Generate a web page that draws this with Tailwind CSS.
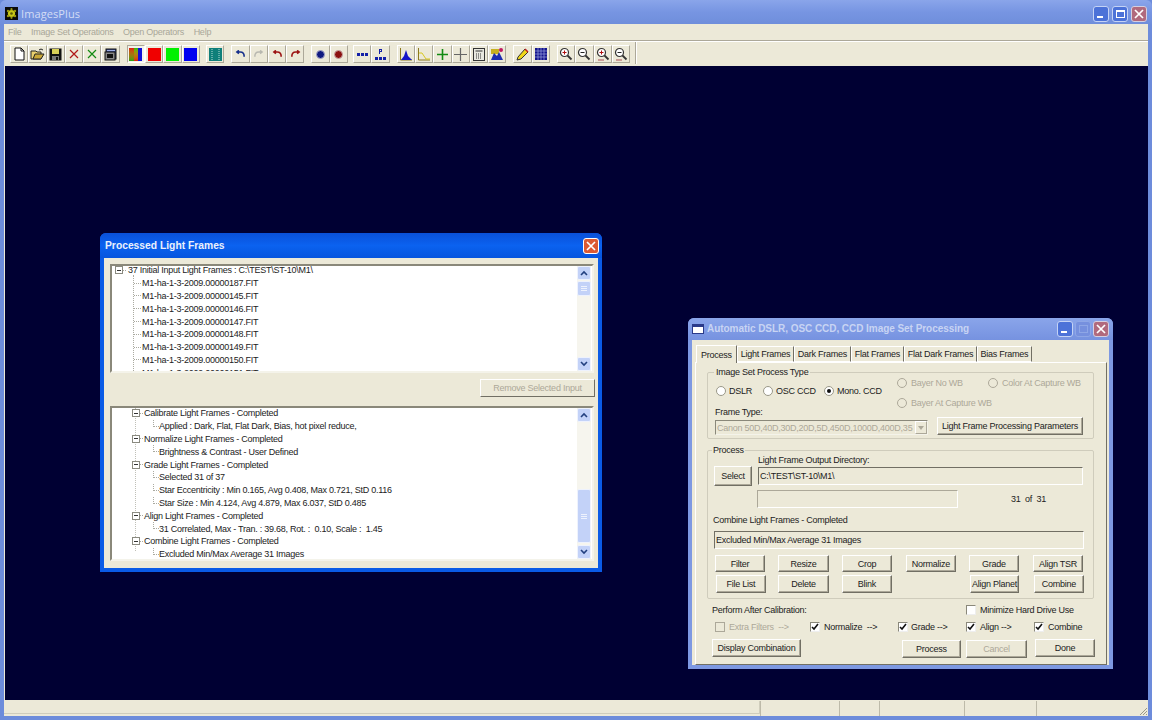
<!DOCTYPE html>
<html><head><meta charset="utf-8">
<script src="https://cdn.jsdelivr.net/npm/@tailwindcss/browser@4"></script>
<title>ImagesPlus</title></head>
<body class="m-0">
<div class="w-[1152px] h-[720px] overflow-hidden flex flex-col bg-[#6d8cdb] font-['Liberation_Sans',sans-serif] text-[9px] leading-[12px] tracking-[-0.25px] text-[#222]">
  <!-- main title bar -->
  <div class="h-[24px] shrink-0 flex items-center pt-[3px] pl-[5px] pr-[5px] bg-gradient-to-b from-[#8aa5ea] via-[#7795e2] to-[#6f8edb] rounded-t-[6px]">
    <svg class="w-[13px] h-[13px] shrink-0" viewBox="0 0 13 13"><rect width="13" height="13" fill="#0a0a0a"/><circle cx="6.5" cy="6.5" r="3.6" fill="#c8c818"/><circle cx="3" cy="4" r="1.2" fill="#9a9a10"/><circle cx="10" cy="4" r="1.2" fill="#9a9a10"/><circle cx="3" cy="9" r="1.2" fill="#9a9a10"/><circle cx="10" cy="9" r="1.2" fill="#9a9a10"/><circle cx="6.5" cy="2.2" r="1.1" fill="#9a9a10"/><circle cx="6.5" cy="10.8" r="1.1" fill="#9a9a10"/><circle cx="6.5" cy="6.5" r="1.3" fill="#5a5a08"/></svg>
    <span class="ml-[3px] text-[11px] tracking-[0.1px] text-[#d3ddf5] font-['Open_Sans',sans-serif]">ImagesPlus</span>
    <div class="ml-auto flex gap-[3px]">
      <div class="w-[16px] h-[16px] rounded-[3px] bg-[#4c72d8] border border-[#c5d3f5] flex items-end pl-[3px] pb-[3px]"><span class="w-[6px] h-[2px] bg-white"></span></div>
      <div class="w-[16px] h-[16px] rounded-[3px] bg-[#4c72d8] border border-[#c5d3f5] flex items-center justify-center"><span class="w-[9px] h-[8px] border border-white border-t-2"></span></div>
      <div class="w-[16px] h-[16px] rounded-[3px] bg-[#b16a7d] border border-[#d5cfe0] flex items-center justify-center"><svg class="w-[10px] h-[10px]" viewBox="0 0 10 10"><path d="M1 1L9 9M9 1L1 9" stroke="#fff" stroke-width="1.7"/></svg></div>
    </div>
  </div>
  <div class="flex-1 min-h-0 mx-[4px] mb-[4px] flex flex-col bg-[#ece9d8]">
    <!-- menu -->
    <div class="h-[16px] shrink-0 flex items-center pl-[4px] gap-[9.5px] text-[#a9a799]">
      <span>File</span><span>Image Set Operations</span><span>Open Operators</span><span>Help</span>
    </div>
    <!-- toolbar -->
    <div class="h-[26px] shrink-0 border-t border-t-[#aca899] shadow-[inset_0_1px_0_#fff] flex items-start pt-[4px] pl-[6px]">
      <div class="flex h-[18px]">
        <div class="w-[18.3px] h-[18px] border border-t-white border-l-white border-r-[#aca899] border-b-[#aca899] flex items-center justify-center"><svg class="w-[14px] h-[14px]" viewBox="0 0 14 14"><path d="M3 1h6l3 3v9H3z" fill="#fff" stroke="#111"/><path d="M9 1v3h3" fill="none" stroke="#111"/></svg></div>
        <div class="w-[18.3px] h-[18px] border border-t-white border-l-white border-r-[#aca899] border-b-[#aca899] flex items-center justify-center"><svg class="w-[15px] h-[14px]" viewBox="0 0 15 14"><path d="M1 4h5l1 1h4v7H1z" fill="#e8d070" stroke="#222"/><path d="M3 12l2-5h9l-3 5z" fill="#c9a838" stroke="#222"/><path d="M9 3q2-2 4 0" stroke="#222" fill="none"/></svg></div>
        <div class="w-[18.3px] h-[18px] border border-t-white border-l-white border-r-[#aca899] border-b-[#aca899] flex items-center justify-center"><svg class="w-[13px] h-[13px]" viewBox="0 0 13 13"><rect x=".5" y=".5" width="12" height="12" fill="#111"/><rect x="3" y="1" width="7" height="5" fill="#d8d058"/><rect x="3" y="8" width="7" height="4" fill="#777"/><rect x="7" y="9" width="2" height="3" fill="#111"/></svg></div>
        <div class="w-[18.3px] h-[18px] border border-t-white border-l-white border-r-[#aca899] border-b-[#aca899] flex items-center justify-center"><svg class="w-[10px] h-[10px]" viewBox="0 0 10 10"><path d="M1 1L9 9M9 1L1 9" stroke="#b01818" stroke-width="1.2"/></svg></div>
        <div class="w-[18.3px] h-[18px] border border-t-white border-l-white border-r-[#aca899] border-b-[#aca899] flex items-center justify-center"><svg class="w-[10px] h-[10px]" viewBox="0 0 10 10"><path d="M1 1L9 9M9 1L1 9" stroke="#128a12" stroke-width="1.2"/></svg></div>
        <div class="w-[18.3px] h-[18px] border border-t-white border-l-white border-r-[#aca899] border-b-[#aca899] flex items-center justify-center"><svg class="w-[13px] h-[13px]" viewBox="0 0 13 13"><rect x="2" y="1" width="10" height="10" fill="#3a4a8a" stroke="#111"/><rect x="1" y="4" width="10" height="8" fill="#888" stroke="#111"/><rect x="3" y="6" width="6" height="4" fill="#111"/><rect x="3" y="2" width="8" height="1" fill="#9fb0e8"/></svg></div>
      </div>
      <div class="flex h-[18px] ml-[7px]">
        <div class="w-[18.3px] h-[18px] border border-t-[#aca899] border-l-[#aca899] border-r-white border-b-white bg-[#f4f3ea] flex items-center justify-center"><div class="w-[13px] h-[13px] flex"><span class="flex-1 bg-gradient-to-b from-[#e01010] to-[#10a010]"></span><span class="flex-1 bg-gradient-to-b from-[#10c010] to-[#e01010]"></span><span class="flex-1 bg-[#1010d8]"></span></div></div>
        <div class="w-[18.3px] h-[18px] border border-t-white border-l-white border-r-[#aca899] border-b-[#aca899] flex items-center justify-center"><span class="w-[13px] h-[13px] bg-[#f00000]"></span></div>
        <div class="w-[18.3px] h-[18px] border border-t-white border-l-white border-r-[#aca899] border-b-[#aca899] flex items-center justify-center"><span class="w-[13px] h-[13px] bg-[#00f000]"></span></div>
        <div class="w-[18.3px] h-[18px] border border-t-white border-l-white border-r-[#aca899] border-b-[#aca899] flex items-center justify-center"><span class="w-[13px] h-[13px] bg-[#0000f0]"></span></div>
      </div>
      <div class="flex h-[18px] ml-[6px]">
        <div class="w-[18.3px] h-[18px] border border-t-white border-l-white border-r-[#aca899] border-b-[#aca899] flex items-center justify-center"><svg class="w-[13px] h-[13px]" viewBox="0 0 13 13"><rect width="13" height="13" fill="#0f7f7a"/><path d="M3 1v11M10 1v11" stroke="#b8ddd8" stroke-dasharray="1 1"/></svg></div>
      </div>
      <div class="flex h-[18px] ml-[7px]">
        <div class="w-[18.3px] h-[18px] border border-t-white border-l-white border-r-[#aca899] border-b-[#aca899] flex items-center justify-center"><svg class="w-[11px] h-[8px]" viewBox="0 0 12 10"><path d="M10.5 8.5Q11 2.5 5.5 2.5H2M4 .5L1.5 2.5 4 4.5" fill="none" stroke="#16308c" stroke-width="2"/></svg></div>
        <div class="w-[18.3px] h-[18px] border border-t-white border-l-white border-r-[#aca899] border-b-[#aca899] flex items-center justify-center"><svg class="w-[11px] h-[8px]" viewBox="0 0 12 10"><path d="M1.5 8.5Q1 2.5 6.500 2.500H10M8 .5L10.500 2.500 8 4.500" fill="none" stroke="#b8b8b0" stroke-width="1.8"/></svg></div>
        <div class="w-[18.3px] h-[18px] border border-t-white border-l-white border-r-[#aca899] border-b-[#aca899] flex items-center justify-center"><svg class="w-[11px] h-[8px]" viewBox="0 0 12 10"><path d="M10.5 8.5Q11 2.5 5.5 2.5H2M4 .5L1.5 2.5 4 4.5" fill="none" stroke="#9c1414" stroke-width="2"/></svg></div>
        <div class="w-[18.3px] h-[18px] border border-t-white border-l-white border-r-[#aca899] border-b-[#aca899] flex items-center justify-center"><svg class="w-[11px] h-[8px]" viewBox="0 0 12 10"><path d="M1.5 8.5Q1 2.5 6.500 2.500H10M8 .5L10.500 2.500 8 4.500" fill="none" stroke="#9c1414" stroke-width="2"/></svg></div>
      </div>
      <div class="flex h-[18px] ml-[7px]">
        <div class="w-[18.3px] h-[18px] border border-t-white border-l-white border-r-[#aca899] border-b-[#aca899] flex items-center justify-center"><span class="w-[9px] h-[9px] rounded-full bg-[#101a80] border border-[#a8a8c8]"></span></div>
        <div class="w-[18.3px] h-[18px] border border-t-white border-l-white border-r-[#aca899] border-b-[#aca899] flex items-center justify-center"><span class="w-[9px] h-[9px] rounded-full bg-[#8c1010] border border-[#c8a8a8]"></span></div>
      </div>
      <div class="flex h-[18px] ml-[5px]">
        <div class="w-[18.3px] h-[18px] border border-t-white border-l-white border-r-[#aca899] border-b-[#aca899] flex items-center justify-center gap-[1px]"><span class="w-[3px] h-[3px] bg-[#1420a8]"></span><span class="w-[3px] h-[3px] bg-[#1420a8]"></span><span class="w-[3px] h-[3px] bg-[#1420a8]"></span></div>
        <div class="w-[18.3px] h-[18px] border border-t-white border-l-white border-r-[#aca899] border-b-[#aca899] flex items-center justify-center"><svg class="w-[13px] h-[13px]" viewBox="0 0 13 13"><path d="M5 1h3v3H6v2H5zM6 2v1h1V2z" fill="#1420a8"/><rect x="1" y="9" width="3" height="3" fill="#1420a8"/><rect x="5" y="9" width="3" height="3" fill="#1420a8"/><rect x="9" y="9" width="3" height="3" fill="#1420a8"/></svg></div>
      </div>
      <div class="flex h-[18px] ml-[7px]">
        <div class="w-[18.3px] h-[18px] border border-t-white border-l-white border-r-[#aca899] border-b-[#aca899] flex items-center justify-center"><svg class="w-[14px] h-[14px]" viewBox="0 0 14 14"><path d="M1.500 1v12H13" stroke="#8c7a20" fill="none"/><path d="M2 13L5 9 7 3l2 6 4 4z" fill="#1414c8"/></svg></div>
        <div class="w-[18.3px] h-[18px] border border-t-white border-l-white border-r-[#aca899] border-b-[#aca899] flex items-center justify-center"><svg class="w-[14px] h-[14px]" viewBox="0 0 14 14"><path d="M1.500 1v12H13" stroke="#8c7a20" fill="none"/><path d="M2 6h3l4 6h4" stroke="#d8c820" fill="none"/></svg></div>
        <div class="w-[18.300px] h-[18px] border border-t-white border-l-white border-r-[#aca899] border-b-[#aca899] flex items-center justify-center"><svg class="w-[11px] h-[11px]" viewBox="0 0 11 11"><path d="M5.500 0v11M0 5.500h11" stroke="#128a12" stroke-width="1.6"/></svg></div>
        <div class="w-[18.3px] h-[18px] border border-t-white border-l-white border-r-[#aca899] border-b-[#aca899] flex items-center justify-center"><svg class="w-[13px] h-[13px]" viewBox="0 0 13 13"><path d="M6.500 0v13M0 6.500h13" stroke="#666" stroke-width="1.200"/></svg></div>
        <div class="w-[18.3px] h-[18px] border border-t-white border-l-white border-r-[#aca899] border-b-[#aca899] flex items-center justify-center"><svg class="w-[12px] h-[13px]" viewBox="0 0 12 13"><rect x=".5" y=".5" width="11" height="12" fill="#e8e8e0" stroke="#333"/><path d="M2.500 3h7" stroke="#333"/><path d="M3 6h6M3 8h6M3 10h6" stroke="#333" stroke-dasharray="1 1"/></svg></div>
        <div class="w-[18.3px] h-[18px] border border-t-white border-l-white border-r-[#aca899] border-b-[#aca899] flex items-center justify-center"><svg class="w-[14px] h-[14px]" viewBox="0 0 14 14"><rect x="1" y="2" width="8" height="5" fill="#c8b020"/><path d="M1 13l3-7 3 3 2-4 4 8z" fill="#1c2cb0"/><circle cx="11" cy="3" r="2" fill="#c01860"/></svg></div>
      </div>
      <div class="flex h-[18px] ml-[7px]">
        <div class="w-[18.3px] h-[18px] border border-t-white border-l-white border-r-[#aca899] border-b-[#aca899] flex items-center justify-center"><svg class="w-[14px] h-[14px]" viewBox="0 0 14 14"><path d="M2 10L9 2l3 3-7 7-4 1z" fill="#f0d818" stroke="#333"/><path d="M9 2l3 3" stroke="#c02020" stroke-width="1.500"/></svg></div>
        <div class="w-[18.3px] h-[18px] border border-t-white border-l-white border-r-[#aca899] border-b-[#aca899] flex items-center justify-center"><svg class="w-[12px] h-[12px]" viewBox="0 0 12 12"><rect width="12" height="12" fill="#14148c"/><path d="M3 0v12M6 0v12M9 0v12M0 3h12M0 6h12M0 9h12" stroke="#9aa0e0" stroke-width=".7"/></svg></div>
      </div>
      <div class="flex h-[18px] ml-[7px]">
        <div class="w-[18.3px] h-[18px] border border-t-white border-l-white border-r-[#aca899] border-b-[#aca899] flex items-center justify-center"><svg class="w-[14px] h-[14px]" viewBox="0 0 14 14"><circle cx="5.500" cy="5.500" r="4" fill="#fff" stroke="#333" stroke-width="1.200"/><path d="M8.500 8.500l4 4" stroke="#333" stroke-width="1.800"/><path d="M3.500 5.500h4M5.500 3.500v4" stroke="#b01010"/></svg></div>
        <div class="w-[18.3px] h-[18px] border border-t-white border-l-white border-r-[#aca899] border-b-[#aca899] flex items-center justify-center"><svg class="w-[14px] h-[14px]" viewBox="0 0 14 14"><circle cx="5.500" cy="5.500" r="4" fill="#fff" stroke="#333" stroke-width="1.200"/><path d="M8.500 8.500l4 4" stroke="#333" stroke-width="1.800"/><path d="M3.500 5.500h4" stroke="#222"/></svg></div>
        <div class="w-[18.3px] h-[18px] border border-t-white border-l-white border-r-[#aca899] border-b-[#aca899] flex items-center justify-center"><svg class="w-[14px] h-[14px]" viewBox="0 0 14 14"><circle cx="5.500" cy="5.500" r="4" fill="#fff" stroke="#333" stroke-width="1.200"/><path d="M8.500 8.500l4 4" stroke="#333" stroke-width="1.800"/><path d="M3.500 5.500h4M5.500 3.500v4" stroke="#b01010"/><path d="M2 13h6" stroke="#c08080" stroke-width="1.500"/></svg></div>
        <div class="w-[18.3px] h-[18px] border border-t-white border-l-white border-r-[#aca899] border-b-[#aca899] flex items-center justify-center"><svg class="w-[14px] h-[14px]" viewBox="0 0 14 14"><circle cx="5.500" cy="5.500" r="4" fill="#fff" stroke="#333" stroke-width="1.200"/><path d="M8.500 8.500l4 4" stroke="#333" stroke-width="1.800"/><path d="M3.500 5.500h4" stroke="#222"/><path d="M2 13h6" stroke="#c08080" stroke-width="1.500"/></svg></div>
      </div>
      <div class="ml-[5px] w-[2px] h-[22px] -mt-[3px] border-l border-l-[#aca899] border-r border-r-white"></div>
    </div>
    <!-- MDI area -->
    <div class="relative flex-1 min-h-0 bg-[#000033] ml-[1px] border-b border-[#ece9d8]">

      <!-- Processed Light Frames -->
      <div class="absolute left-[95px] top-[167px] w-[502px] h-[339px] flex flex-col bg-[#0a5be6] rounded-t-[6px] px-[4px] pb-[4px]">
        <div class="h-[25px] shrink-0 -mx-[4px] flex items-center pl-[5px] pr-[3px] rounded-t-[6px] bg-gradient-to-b from-[#0a50d8] via-[#0b62f0] to-[#0655de]">
          <span class="text-[10.3px] font-bold tracking-[0px] text-[#eaf0fc]">Processed Light Frames</span>
          <div class="ml-auto w-[16px] h-[16px] rounded-[3px] bg-[#dc5a32] border border-white flex items-center justify-center"><svg class="w-[10px] h-[10px]" viewBox="0 0 10 10"><path d="M1 1L9 9M9 1L1 9" stroke="#fff" stroke-width="1.700"/></svg></div>
        </div>
        <div class="flex-1 bg-[#ece9d8] pl-[6px] pt-[6px] flex flex-col">
          <!-- tree 1 -->
          <div class="w-[484px] h-[109px] shrink-0 border-2 border-t-[#8a887a] border-l-[#8a887a] border-r-[#f4f3ea] border-b-[#f4f3ea] bg-white flex overflow-hidden">
            <div class="relative flex-1 overflow-hidden">
              <span class="absolute left-[21px] top-[9px] bottom-0 border-l border-dotted border-[#aaaaa0]"></span>
              <div class="-mt-[2px]">
                <div class="h-[12.8px] flex items-center pl-[3px]"><span class="w-[8px] h-[8px] border border-[#8a8a80] bg-white flex items-center justify-center shrink-0"><span class="w-[4px] h-[1px] bg-[#333]"></span></span><span class="w-[3px] border-t border-dotted border-[#aaaaa0]"></span><span class="ml-[2px]">37 Initial Input Light Frames : C:\TEST\ST-10\M1\</span></div>
                <div class="h-[12.8px] flex items-center pl-[22px]"><span class="w-[7px] border-t border-dotted border-[#aaaaa0]"></span><span class="ml-[1px]">M1-ha-1-3-2009.00000187.FIT</span></div>
                <div class="h-[12.8px] flex items-center pl-[22px]"><span class="w-[7px] border-t border-dotted border-[#aaaaa0]"></span><span class="ml-[1px]">M1-ha-1-3-2009.00000145.FIT</span></div>
                <div class="h-[12.8px] flex items-center pl-[22px]"><span class="w-[7px] border-t border-dotted border-[#aaaaa0]"></span><span class="ml-[1px]">M1-ha-1-3-2009.00000146.FIT</span></div>
                <div class="h-[12.8px] flex items-center pl-[22px]"><span class="w-[7px] border-t border-dotted border-[#aaaaa0]"></span><span class="ml-[1px]">M1-ha-1-3-2009.00000147.FIT</span></div>
                <div class="h-[12.8px] flex items-center pl-[22px]"><span class="w-[7px] border-t border-dotted border-[#aaaaa0]"></span><span class="ml-[1px]">M1-ha-1-3-2009.00000148.FIT</span></div>
                <div class="h-[12.8px] flex items-center pl-[22px]"><span class="w-[7px] border-t border-dotted border-[#aaaaa0]"></span><span class="ml-[1px]">M1-ha-1-3-2009.00000149.FIT</span></div>
                <div class="h-[12.8px] flex items-center pl-[22px]"><span class="w-[7px] border-t border-dotted border-[#aaaaa0]"></span><span class="ml-[1px]">M1-ha-1-3-2009.00000150.FIT</span></div>
                <div class="h-[12.8px] flex items-center pl-[22px]"><span class="w-[7px] border-t border-dotted border-[#aaaaa0]"></span><span class="ml-[1px]">M1-ha-1-3-2009.00000151.FIT</span></div>
              </div>
            </div>
            <div class="w-[14px] mr-[1px] shrink-0 bg-[#f6f5ee] flex flex-col">
              <div class="h-[14px] shrink-0 rounded-[2px] bg-[#c3d2f8] border border-[#eef2fd] flex items-center justify-center"><svg class="w-[8px] h-[6px]" viewBox="0 0 8 6"><path d="M1 5l3-3 3 3" fill="none" stroke="#23407f" stroke-width="1.600"/></svg></div>
              <div class="h-[15px] mt-[1px] shrink-0 rounded-[2px] bg-[#c3d2f8] border border-[#eef2fd] flex flex-col items-center justify-center gap-[1px]"><span class="w-[6px] h-[1px] bg-[#eef2fd]"></span><span class="w-[6px] h-[1px] bg-[#eef2fd]"></span><span class="w-[6px] h-[1px] bg-[#eef2fd]"></span></div>
              <div class="flex-1"></div>
              <div class="h-[14px] shrink-0 rounded-[2px] bg-[#c3d2f8] border border-[#eef2fd] flex items-center justify-center"><svg class="w-[8px] h-[6px]" viewBox="0 0 8 6"><path d="M1 1l3 3 3-3" fill="none" stroke="#23407f" stroke-width="1.600"/></svg></div>
            </div>
          </div>
          <div class="h-[18px] mt-[6px] shrink-0 flex justify-end pr-[3px]">
            <div class="w-[115px] border border-t-white border-l-white border-r-[#716f64] border-b-[#716f64] flex items-center justify-center text-[#aca899]">Remove Selected Input</div>
          </div>
          <!-- tree 2 -->
          <div class="w-[484px] h-[155px] mt-[9px] shrink-0 border-2 border-t-[#8a887a] border-l-[#8a887a] border-r-[#f4f3ea] border-b-[#f4f3ea] bg-white flex overflow-hidden">
            <div class="relative flex-1 overflow-hidden">
              <span class="absolute left-[23px] top-0 bottom-[8px] border-l border-dotted border-[#c0c0b8]"></span>
              <div class="-mt-[1px] relative">
                <div class="h-[12.8px] flex items-center pl-[20px]"><span class="w-[8px] h-[8px] border border-[#8a8a80] bg-white flex items-center justify-center shrink-0"><span class="w-[4px] h-[1px] bg-[#333]"></span></span><span class="w-[3px] border-t border-dotted border-[#aaaaa0]"></span><span class="ml-[1px]">Calibrate Light Frames - Completed</span></div>
                <div class="h-[12.8px] flex items-center pl-[41px]"><span class="w-[6px] h-[7px] self-start border-l border-b border-dotted border-[#aaaaa0]"></span><span class="ml-[0px]">Applied : Dark, Flat, Flat Dark, Bias, hot pixel reduce,</span></div>
                <div class="h-[12.8px] flex items-center pl-[20px]"><span class="w-[8px] h-[8px] border border-[#8a8a80] bg-white flex items-center justify-center shrink-0"><span class="w-[4px] h-[1px] bg-[#333]"></span></span><span class="w-[3px] border-t border-dotted border-[#aaaaa0]"></span><span class="ml-[1px]">Normalize Light Frames - Completed</span></div>
                <div class="h-[12.8px] flex items-center pl-[41px]"><span class="w-[6px] h-[7px] self-start border-l border-b border-dotted border-[#aaaaa0]"></span><span class="ml-[0px]">Brightness &amp; Contrast - User Defined</span></div>
                <div class="h-[12.8px] flex items-center pl-[20px]"><span class="w-[8px] h-[8px] border border-[#8a8a80] bg-white flex items-center justify-center shrink-0"><span class="w-[4px] h-[1px] bg-[#333]"></span></span><span class="w-[3px] border-t border-dotted border-[#aaaaa0]"></span><span class="ml-[1px]">Grade Light Frames - Completed</span></div>
                <div class="h-[12.8px] flex items-center pl-[41px]"><span class="w-[6px] h-[7px] self-start border-l border-b border-dotted border-[#aaaaa0]"></span><span class="ml-[0px]">Selected 31 of 37</span></div>
                <div class="h-[12.8px] flex items-center pl-[41px]"><span class="w-[6px] h-[7px] self-start border-l border-b border-dotted border-[#aaaaa0]"></span><span class="ml-[0px]">Star Eccentricity : Min 0.165, Avg 0.408, Max 0.721, StD 0.116</span></div>
                <div class="h-[12.8px] flex items-center pl-[41px]"><span class="w-[6px] h-[7px] self-start border-l border-b border-dotted border-[#aaaaa0]"></span><span class="ml-[0px]">Star Size : Min 4.124, Avg 4.879, Max 6.037, StD 0.485</span></div>
                <div class="h-[12.8px] flex items-center pl-[20px]"><span class="w-[8px] h-[8px] border border-[#8a8a80] bg-white flex items-center justify-center shrink-0"><span class="w-[4px] h-[1px] bg-[#333]"></span></span><span class="w-[3px] border-t border-dotted border-[#aaaaa0]"></span><span class="ml-[1px]">Align Light Frames - Completed</span></div>
                <div class="h-[12.8px] flex items-center pl-[41px]"><span class="w-[6px] h-[7px] self-start border-l border-b border-dotted border-[#aaaaa0]"></span><span class="ml-[0px] whitespace-pre">31 Correlated, Max - Tran. : 39.68, Rot. :  0.10, Scale :  1.45</span></div>
                <div class="h-[12.8px] flex items-center pl-[20px]"><span class="w-[8px] h-[8px] border border-[#8a8a80] bg-white flex items-center justify-center shrink-0"><span class="w-[4px] h-[1px] bg-[#333]"></span></span><span class="w-[3px] border-t border-dotted border-[#aaaaa0]"></span><span class="ml-[1px]">Combine Light Frames - Completed</span></div>
                <div class="h-[12.8px] flex items-center pl-[41px]"><span class="w-[6px] h-[7px] self-start border-l border-b border-dotted border-[#aaaaa0]"></span><span class="ml-[0px]">Excluded Min/Max Average 31 Images</span></div>
              </div>
            </div>
            <div class="w-[14px] mr-[1px] shrink-0 bg-[#f6f5ee] flex flex-col">
              <div class="h-[14px] shrink-0 rounded-[2px] bg-[#c3d2f8] border border-[#eef2fd] flex items-center justify-center"><svg class="w-[8px] h-[6px]" viewBox="0 0 8 6"><path d="M1 5l3-3 3 3" fill="none" stroke="#23407f" stroke-width="1.600"/></svg></div>
              <div class="flex-1"></div>
              <div class="h-[54px] shrink-0 rounded-[2px] bg-[#c3d2f8] border border-[#eef2fd] flex flex-col items-center justify-center gap-[1px]"><span class="w-[6px] h-[1px] bg-[#eef2fd]"></span><span class="w-[6px] h-[1px] bg-[#eef2fd]"></span><span class="w-[6px] h-[1px] bg-[#eef2fd]"></span></div>
              <div class="h-[2px] shrink-0"></div>
              <div class="h-[14px] shrink-0 rounded-[2px] bg-[#c3d2f8] border border-[#eef2fd] flex items-center justify-center"><svg class="w-[8px] h-[6px]" viewBox="0 0 8 6"><path d="M1 1l3 3 3-3" fill="none" stroke="#23407f" stroke-width="1.600"/></svg></div>
            </div>
          </div>
        </div>
      </div>

      <!-- Automatic dialog -->
      <div class="absolute left-[683px] top-[252px] w-[425px] h-[351px] flex flex-col bg-[#7d98e2] rounded-t-[6px] px-[4px] pb-[4px]">
        <div class="h-[22px] shrink-0 -mx-[4px] flex items-center pl-[4px] pr-[4px] rounded-t-[6px] bg-gradient-to-b from-[#8aa5ea] to-[#7692e0]">
          <span class="w-[12px] h-[10px] bg-white border border-[#2a3a8a] border-t-[3px] shrink-0"></span>
          <span class="ml-[3px] text-[10px] font-bold tracking-[-0.05px] text-[#c8d4f3]">Automatic DSLR, OSC CCD, CCD Image Set Processing</span>
          <div class="ml-auto flex gap-[2px]">
            <div class="w-[16px] h-[16px] rounded-[3px] bg-[#4c72d8] border border-[#c5d3f5] flex items-end pl-[3px] pb-[3px]"><span class="w-[6px] h-[2px] bg-white"></span></div>
            <div class="w-[16px] h-[16px] rounded-[3px] bg-[#7690de] border border-[#8ea6e6] flex items-center justify-center"><span class="w-[9px] h-[8px] border border-[#8ea6e6]"></span></div>
            <div class="w-[16px] h-[16px] rounded-[3px] bg-[#b16a7d] border border-[#d5cfe0] flex items-center justify-center"><svg class="w-[10px] h-[10px]" viewBox="0 0 10 10"><path d="M1 1L9 9M9 1L1 9" stroke="#fff" stroke-width="1.700"/></svg></div>
          </div>
        </div>
        <div class="flex-1 bg-[#ece9d8] flex flex-col pl-[3px]">
          <!-- tabs -->
          <div class="h-[22px] pt-[6px] shrink-0 flex items-end relative z-10 pl-[1px]">
            <div class="w-[41px] h-[18px] -mb-[1px] bg-[#ece9d8] border border-white border-r-[#716f64] border-b-0 flex items-center justify-center">Process</div>
            <div class="w-[57px] h-[16px] border border-white border-r-[#716f64] flex items-center justify-center">Light Frames</div>
            <div class="w-[57px] h-[16px] border border-white border-r-[#716f64] flex items-center justify-center">Dark Frames</div>
            <div class="w-[53px] h-[16px] border border-white border-r-[#716f64] flex items-center justify-center">Flat Frames</div>
            <div class="w-[73px] h-[16px] border border-white border-r-[#716f64] flex items-center justify-center">Flat Dark Frames</div>
            <div class="w-[55px] h-[16px] border border-white border-r-[#716f64] flex items-center justify-center">Bias Frames</div>
          </div>
          <!-- panel -->
          <div class="w-[412px] h-[303px] shrink-0 border border-t-white border-l-white border-r-[#716f64] border-b-[#716f64]">
            <!-- group 1 -->
            <div class="relative ml-[11px] mt-[9px] w-[387px] h-[67px] border border-[#cfccbc] rounded-[2px]">
              <span class="absolute left-[6px] -top-[7px] bg-[#ece9d8] px-[2px]">Image Set Process Type</span>
              <div class="h-[32px] flex">
                <div class="w-[189px] pl-[8px] pt-[12px] flex items-start">
                  <div class="w-[47px] flex items-center gap-[3px]"><span class="w-[10px] h-[10px] rounded-full bg-white border border-[#9a9888] shrink-0"></span><span>DSLR</span></div>
                  <div class="w-[61px] flex items-center gap-[3px]"><span class="w-[10px] h-[10px] rounded-full bg-white border border-[#9a9888] shrink-0"></span><span>OSC CCD</span></div>
                  <div class="flex items-center gap-[3px]"><span class="w-[10px] h-[10px] rounded-full bg-white border border-[#9a9888] shrink-0 flex items-center justify-center"><span class="w-[4px] h-[4px] rounded-full bg-[#111]"></span></span><span class="whitespace-nowrap">Mono. CCD</span></div>
                </div>
                <div class="text-[#aca899]">
                  <div class="h-[20px] flex items-center w-[190px]">
                    <div class="w-[91px] flex items-center gap-[4px]"><span class="w-[10px] h-[10px] rounded-full border border-[#aca899] shrink-0"></span><span>Bayer No WB</span></div>
                    <div class="flex items-center gap-[4px]"><span class="w-[10px] h-[10px] rounded-full border border-[#aca899] shrink-0"></span><span class="whitespace-nowrap">Color At Capture WB</span></div>
                  </div>
                  <div class="h-[20px] flex items-center gap-[4px]"><span class="w-[10px] h-[10px] rounded-full border border-[#aca899] shrink-0"></span><span class="whitespace-nowrap">Bayer At Capture WB</span></div>
                </div>
              </div>
              <div class="flex pl-[7px]">
                <div class="w-[222px]">
                  <div class="h-[14px] flex items-center">Frame Type:</div>
                  <div class="mt-[1px] w-[213px] h-[15px] border border-t-[#8a887a] border-l-[#8a887a] border-r-[#f4f3ea] border-b-[#f4f3ea] flex items-center overflow-hidden">
                    <span class="pl-[1px] flex-1 overflow-hidden whitespace-nowrap text-[#aca899]">Canon 50D,40D,30D,20D,5D,450D,1000D,400D,35</span>
                    <span class="w-[12px] h-[13px] shrink-0 border border-t-white border-l-white border-r-[#aca899] border-b-[#aca899] flex items-center justify-center"><svg class="w-[6px] h-[4px]" viewBox="0 0 6 4"><path d="M0 0h6L3 4z" fill="#aca899"/></svg></span>
                  </div>
                </div>
                <div class="mt-[12px] w-[146px] h-[18px] border border-t-white border-l-white border-r-[#716f64] border-b-[#716f64] shadow-[inset_-1px_-1px_0_#aca899] flex items-center justify-center whitespace-nowrap">Light Frame Processing Parameters</div>
              </div>
            </div>
            <!-- group 2 -->
            <div class="relative ml-[11px] mt-[11px] w-[387px] h-[149px] border border-[#cfccbc] rounded-[2px]">
              <span class="absolute left-[4px] -top-[7px] bg-[#ece9d8] px-[1px]">Process</span>
              <div class="flex pl-[6px]">
                <div class="mt-[15px] w-[38px] h-[20px] border border-t-white border-l-white border-r-[#716f64] border-b-[#716f64] shadow-[inset_-1px_-1px_0_#aca899] flex items-center justify-center">Select</div>
                <div class="ml-[6px]">
                  <div class="mt-[3px] h-[12px]">Light Frame Output Directory:</div>
                  <div class="mt-[1px] w-[325px] h-[18px] border border-t-[#716f64] border-l-[#716f64] border-r-white border-b-white flex items-center pl-[1px]">C:\TEST\ST-10\M1\</div>
                  <div class="mt-[5px] flex -ml-[1px] h-[18px]">
                    <div class="w-[201px] h-[18px] border border-t-[#aca899] border-l-[#aca899] border-r-white border-b-white"></div>
                    <span class="ml-[53px] self-end whitespace-pre pb-[3px]">31  of  31</span>
                  </div>
                </div>
              </div>
              <div class="mt-[6px] ml-[5px] h-[12px]">Combine Light Frames - Completed</div>
              <div class="mt-[5px] ml-[6px] w-[370px] h-[18px] border border-t-[#716f64] border-l-[#716f64] border-r-white border-b-white flex items-center pl-[1px]">Excluded Min/Max Average 31 Images</div>
              <div class="mt-[6px] ml-[7px] flex h-[17px]">
                <div class="w-[50px] border border-t-white border-l-white border-r-[#716f64] border-b-[#716f64] shadow-[inset_-1px_-1px_0_#aca899] flex items-center justify-center">Filter</div>
                <div class="ml-[13px] w-[51px] border border-t-white border-l-white border-r-[#716f64] border-b-[#716f64] shadow-[inset_-1px_-1px_0_#aca899] flex items-center justify-center">Resize</div>
                <div class="ml-[13px] w-[50px] border border-t-white border-l-white border-r-[#716f64] border-b-[#716f64] shadow-[inset_-1px_-1px_0_#aca899] flex items-center justify-center">Crop</div>
                <div class="ml-[14px] w-[50px] border border-t-white border-l-white border-r-[#716f64] border-b-[#716f64] shadow-[inset_-1px_-1px_0_#aca899] flex items-center justify-center">Normalize</div>
                <div class="ml-[13px] w-[50px] border border-t-white border-l-white border-r-[#716f64] border-b-[#716f64] shadow-[inset_-1px_-1px_0_#aca899] flex items-center justify-center">Grade</div>
                <div class="ml-[14px] w-[50px] border border-t-white border-l-white border-r-[#716f64] border-b-[#716f64] shadow-[inset_-1px_-1px_0_#aca899] flex items-center justify-center">Align TSR</div>
              </div>
              <div class="mt-[3px] ml-[8px] flex h-[18px]">
                <div class="w-[50px] border border-t-white border-l-white border-r-[#716f64] border-b-[#716f64] shadow-[inset_-1px_-1px_0_#aca899] flex items-center justify-center">File List</div>
                <div class="ml-[12px] w-[51px] border border-t-white border-l-white border-r-[#716f64] border-b-[#716f64] shadow-[inset_-1px_-1px_0_#aca899] flex items-center justify-center">Delete</div>
                <div class="ml-[13px] w-[50px] border border-t-white border-l-white border-r-[#716f64] border-b-[#716f64] shadow-[inset_-1px_-1px_0_#aca899] flex items-center justify-center">Blink</div>
                <div class="ml-[78px] w-[49px] border border-t-white border-l-white border-r-[#716f64] border-b-[#716f64] shadow-[inset_-1px_-1px_0_#aca899] flex items-center justify-center whitespace-nowrap">Align Planet</div>
                <div class="ml-[15px] w-[50px] border border-t-white border-l-white border-r-[#716f64] border-b-[#716f64] shadow-[inset_-1px_-1px_0_#aca899] flex items-center justify-center">Combine</div>
              </div>
            </div>
            <!-- perform -->
            <div class="mt-[5px] ml-[16px] h-[12px] flex items-center">
              <span class="w-[254px]">Perform After Calibration:</span>
              <span class="w-[10px] h-[10px] bg-white border border-t-[#8a887a] border-l-[#8a887a] border-r-[#eee] border-b-[#eee]"></span>
              <span class="ml-[4px]">Minimize Hard Drive Use</span>
            </div>
            <div class="mt-[5px] ml-[19px] h-[12px] flex items-center">
              <div class="w-[95px] flex items-center gap-[4px] text-[#aca899]"><span class="w-[10px] h-[10px] border border-[#aca899] shrink-0"></span><span class="whitespace-pre">Extra Filters  --&gt;</span></div>
              <div class="w-[88px] flex items-center gap-[4px]"><span class="w-[10px] h-[10px] bg-white border border-t-[#8a887a] border-l-[#8a887a] border-r-[#eee] border-b-[#eee] flex items-center justify-center shrink-0"><svg class="w-[8px] h-[8px]" viewBox="0 0 8 8"><path d="M1 4l2 2 4-5" fill="none" stroke="#111" stroke-width="1.600"/></svg></span><span class="whitespace-pre">Normalize  --&gt;</span></div>
              <div class="w-[68px] flex items-center gap-[3px]"><span class="w-[10px] h-[10px] bg-white border border-t-[#8a887a] border-l-[#8a887a] border-r-[#eee] border-b-[#eee] flex items-center justify-center shrink-0"><svg class="w-[8px] h-[8px]" viewBox="0 0 8 8"><path d="M1 4l2 2 4-5" fill="none" stroke="#111" stroke-width="1.600"/></svg></span><span class="whitespace-pre">Grade --&gt;</span></div>
              <div class="w-[68px] flex items-center gap-[4px]"><span class="w-[10px] h-[10px] bg-white border border-t-[#8a887a] border-l-[#8a887a] border-r-[#eee] border-b-[#eee] flex items-center justify-center shrink-0"><svg class="w-[8px] h-[8px]" viewBox="0 0 8 8"><path d="M1 4l2 2 4-5" fill="none" stroke="#111" stroke-width="1.600"/></svg></span><span class="whitespace-pre">Align --&gt;</span></div>
              <div class="flex items-center gap-[4px]"><span class="w-[10px] h-[10px] bg-white border border-t-[#8a887a] border-l-[#8a887a] border-r-[#eee] border-b-[#eee] flex items-center justify-center shrink-0"><svg class="w-[8px] h-[8px]" viewBox="0 0 8 8"><path d="M1 4l2 2 4-5" fill="none" stroke="#111" stroke-width="1.600"/></svg></span><span>Combine</span></div>
            </div>
            <div class="mt-[6px] ml-[16px] h-[19px] flex items-start">
              <div class="w-[89px] h-[18px] border border-t-white border-l-white border-r-[#716f64] border-b-[#716f64] shadow-[inset_-1px_-1px_0_#aca899] flex items-center justify-center">Display Combination</div>
              <div class="ml-[101px] mt-[1px] w-[59px] h-[18px] border border-t-white border-l-white border-r-[#716f64] border-b-[#716f64] shadow-[inset_-1px_-1px_0_#aca899] flex items-center justify-center">Process</div>
              <div class="ml-[5px] mt-[1px] w-[61px] h-[18px] border border-t-white border-l-white border-r-[#716f64] border-b-[#716f64] shadow-[inset_-1px_-1px_0_#aca899] flex items-center justify-center text-[#aca899]">Cancel</div>
              <div class="ml-[8px] w-[60px] h-[18px] border border-t-white border-l-white border-r-[#716f64] border-b-[#716f64] shadow-[inset_-1px_-1px_0_#aca899] flex items-center justify-center">Done</div>
            </div>
          </div>
        </div>
      </div>
    </div>
    <!-- status bar -->
    <div class="h-[15px] shrink-0 flex">
      <div class="w-[756px] h-[13px] border-r border-b border-[#d0cdbc]"></div>
      <div class="w-[79px] border-l border-[#bdbaa9]"></div>
      <div class="w-[40px] border-l border-[#bdbaa9]"></div>
      <div class="w-[85px] border-l border-[#bdbaa9]"></div>
      <div class="w-[72px] border-l border-[#bdbaa9]"></div>
      <div class="flex-1 border-l border-[#bdbaa9] flex justify-end items-end">
        <svg class="w-[10px] h-[10px]" viewBox="0 0 10 10"><path d="M9 2L2 9M9 5L5 9M9 8L8 9" stroke="#9a9888"/></svg>
      </div>
    </div>
  </div>
</div>
</body></html>
